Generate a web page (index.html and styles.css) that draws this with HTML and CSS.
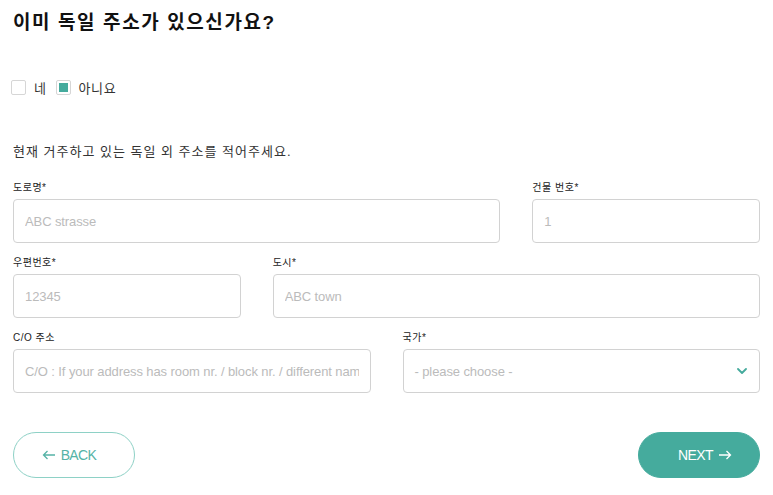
FILE: index.html
```html
<!DOCTYPE html>
<html lang="ko">
<head>
    <meta charset="utf-8">
    <meta name="viewport" content="width=device-width, initial-scale=1">
    <title>주소 입력</title>
    <link rel="stylesheet" href="styles.css">
</head>
<body>
    <div class="page">
        <h1 class="title">이미 독일 주소가 있으신가요?</h1>

        <div class="choice">
            <label class="check"><span class="box"></span>네</label>
            <label class="check"><span class="box checked"></span>아니요</label>
        </div>

        <p class="intro">현재 거주하고 있는 독일 외 주소를 적어주세요.</p>

        <div class="row three">
            <div class="field wide">
                <label class="lbl">도로명*</label>
                <input class="inp" type="text" placeholder="ABC strasse">
            </div>
            <div class="field">
                <label class="lbl">건물 번호*</label>
                <input class="inp" type="text" placeholder="1">
            </div>
        </div>

        <div class="row three">
            <div class="field">
                <label class="lbl">우편번호*</label>
                <input class="inp" type="text" placeholder="12345">
            </div>
            <div class="field wide">
                <label class="lbl">도시*</label>
                <input class="inp" type="text" placeholder="ABC town">
            </div>
        </div>

        <div class="row two">
            <div class="field">
                <label class="lbl">C/O 주소</label>
                <input class="inp" type="text" placeholder="C/O : If your address has room nr. / block nr. / different name">
            </div>
            <div class="field">
                <label class="lbl">국가*</label>
                <div class="inp select">
                    <span>- please choose -</span>
                    <svg width="10" height="6" viewBox="0 0 10 6"><path d="M1 1l4 4 4-4" fill="none" stroke="#45ab9d" stroke-width="1.8" stroke-linecap="round" stroke-linejoin="round"/></svg>
                </div>
            </div>
        </div>

        <div class="actions">
            <button class="btn back">
                <svg width="14" height="10" viewBox="0 0 14 10"><path d="M13 5H1.5M5.5 1L1.5 5l4 4" fill="none" stroke="currentColor" stroke-width="1.3"/></svg>
                BACK
            </button>
            <button class="btn next">
                NEXT
                <svg width="14" height="10" viewBox="0 0 14 10"><path d="M1 5h11.5M8.5 1l4 4-4 4" fill="none" stroke="currentColor" stroke-width="1.3"/></svg>
            </button>
        </div>
    </div>
</body>
</html>
```

FILE: styles.css
```css
body {
    margin: 0;
    background: #fff;
    color: #222;
    font-family: "Liberation Sans", "Noto Sans CJK KR", sans-serif;
}
.page {
    padding: 11px 13px 0 13px;
}
.title {
    margin: 0;
    font-size: 19px;
    line-height: 24px;
    font-weight: bold;
    color: #111;
    letter-spacing: 1.6px;
}
.choice {
    display: flex;
    gap: 9px;
    margin-top: 42px;
    margin-left: -2px;
    height: 20px;
    align-items: center;
}
.check {
    display: flex;
    align-items: center;
    gap: 8px;
    font-size: 13px;
    color: #333;
    letter-spacing: 0.6px;
}
.box {
    width: 13px;
    height: 13px;
    border: 1px solid #d6d6d6;
    border-radius: 2px;
    box-sizing: content-box;
    position: relative;
}
.box.checked::after {
    content: "";
    position: absolute;
    left: 2px;
    top: 2px;
    width: 9px;
    height: 9px;
    background: #45ab9d;
}
.intro {
    margin: 45px 0 0 0;
    font-size: 13px;
    line-height: 20px;
    color: #333;
    letter-spacing: 1px;
}
.row {
    display: grid;
    column-gap: 32px;
    margin-top: 13px;
}
.intro + .row {
    margin-top: 19px;
}
.row.three {
    grid-template-columns: 1fr 1fr 1fr;
}
.row.two {
    grid-template-columns: 1fr 1fr;
}
.field.wide {
    grid-column: span 2;
}
.lbl {
    display: block;
    font-size: 10px;
    line-height: 14px;
    margin-bottom: 4px;
    color: #222;
    letter-spacing: 0.5px;
}
.inp {
    display: block;
    width: 100%;
    height: 44px;
    box-sizing: border-box;
    border: 1px solid #d2d2d2;
    border-radius: 4px;
    padding: 0 11px;
    font-family: "Liberation Sans", "Noto Sans CJK KR", sans-serif;
    font-size: 13px;
    letter-spacing: -0.1px;
    color: #333;
    background: #fff;
    outline: none;
}
.inp::placeholder {
    color: #bbbbbb;
}
.select {
    display: flex;
    align-items: center;
    justify-content: space-between;
    color: #bbbbbb;
    padding-right: 12px;
}
.actions {
    display: flex;
    justify-content: space-between;
    margin-top: 39px;
}
.btn {
    display: flex;
    align-items: center;
    justify-content: center;
    gap: 5px;
    width: 122px;
    height: 46px;
    border-radius: 23px;
    font-family: "Liberation Sans", sans-serif;
    font-size: 14px;
    letter-spacing: -0.6px;
    cursor: pointer;
}
.btn.back {
    background: #fff;
    border: 1px solid #8ed1c6;
    color: #55b3a6;
    padding: 0 10px 0 0;
}
.btn.next {
    background: #45ab9d;
    border: 1px solid #45ab9d;
    color: #fff;
    padding: 0 0 0 12px;
}
```
